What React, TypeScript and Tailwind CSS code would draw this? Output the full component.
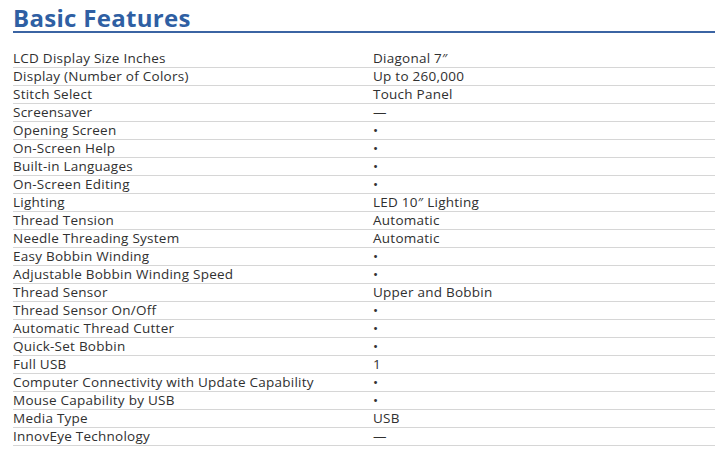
const rows: [string, string][] = [
  ["LCD Display Size Inches", "Diagonal 7\u2033"],
  ["Display (Number of Colors)", "Up to 260,000"],
  ["Stitch Select", "Touch Panel"],
  ["Screensaver", "\u2014"],
  ["Opening Screen", "\u2022"],
  ["On-Screen Help", "\u2022"],
  ["Built-in Languages", "\u2022"],
  ["On-Screen Editing", "\u2022"],
  ["Lighting", "LED 10\u2033 Lighting"],
  ["Thread Tension", "Automatic"],
  ["Needle Threading System", "Automatic"],
  ["Easy Bobbin Winding", "\u2022"],
  ["Adjustable Bobbin Winding Speed", "\u2022"],
  ["Thread Sensor", "Upper and Bobbin"],
  ["Thread Sensor On/Off", "\u2022"],
  ["Automatic Thread Cutter", "\u2022"],
  ["Quick-Set Bobbin", "\u2022"],
  ["Full USB", "1"],
  ["Computer Connectivity with Update Capability", "\u2022"],
  ["Mouse Capability by USB", "\u2022"],
  ["Media Type", "USB"],
  ["InnovEye Technology", "\u2014"],
];

export default function App() {
  return (
    <div className="w-[718px] h-[460px] bg-white font-['Open_Sans',sans-serif]">
      <div className="ml-[13px] w-[702px]">
        {/* Heading */}
        <div className="h-[33px] border-b-2 border-[#3b64a3] flex items-end">
          <h1 className="text-[24px] leading-[26px] font-bold text-[#2f5fa3] tracking-[0.3px]">
            Basic Features
          </h1>
        </div>

        {/* Spec table */}
        <div className="mt-[17px]">
          {rows.map(([label, value]) => (
            <div
              key={label}
              className="h-[18px] border-b border-[#d6d6d6] flex items-center text-[13.5px] leading-[17px] tracking-[0.25px] text-[#303030]"
            >
              <span className="w-[360px]">{label}</span>
              <span>{value}</span>
            </div>
          ))}
        </div>
      </div>
    </div>
  );
}
